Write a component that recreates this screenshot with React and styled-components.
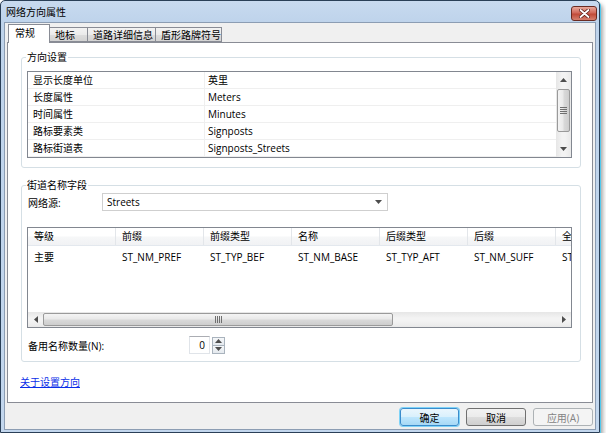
import React from "react";
import styled, { createGlobalStyle } from "styled-components";

const GlobalStyle = createGlobalStyle`
  html, body { margin: 0; padding: 0; background: #ffffff; }
  body {
    font-family: "Open Sans", "Noto Sans CJK SC", sans-serif;
    font-size: 10px;
    color: #000;
  }
  * { box-sizing: border-box; }
`;

const Window = styled.div`
  width: 600px;
  height: 433px;
  display: flex;
  flex-direction: column;
  padding: 0 3px 2px;
  border: 1px solid #2a3f57;
  border-radius: 5px 5px 0 0;
  background: linear-gradient(#c8daef, #bed3eb 22px, #c2d6ed);
  box-shadow: 1px 1px 0 #52c8ec, 3px 4px 4px rgba(0, 0, 0, 0.35);
`;

const TitleBar = styled.div`
  height: 21px;
  display: flex;
  align-items: center;
  justify-content: space-between;
  padding-left: 2px;
`;

const Title = styled.span`
  font-size: 10px;
  line-height: 12px;
  margin-top: 1px;
`;

const CloseButton = styled.div`
  width: 26px;
  height: 15px;
  margin-top: 3px;
  margin-right: -1px;
  display: flex;
  align-items: center;
  justify-content: center;
  border: 1px solid #6b2b22;
  border-radius: 3px;
  background: linear-gradient(#e9a99b, #d0685a 45%, #c04a38 55%, #d5806f);
`;

const Client = styled.div`
  flex: 1;
  display: flex;
  flex-direction: column;
  background: #f0f0f0;
  border: 1px solid #8c9db3;
`;

const TabStrip = styled.div`
  height: 19px;
  display: flex;
  align-items: flex-end;
  padding-left: 3px;
`;

const Tab = styled.div`
  position: relative;
  width: ${(p) => p.$w}px;
  height: ${(p) => (p.$active ? 19 : 15)}px;
  margin-bottom: ${(p) => (p.$active ? -1 : 0)}px;
  margin-right: -1px;
  padding-left: ${(p) => (p.$active ? 6 : 5)}px;
  line-height: ${(p) => (p.$active ? 17 : 14)}px;
  border: 1px solid #898c95;
  border-bottom: ${(p) => (p.$active ? "none" : "1px solid #898c95")};
  background: ${(p) =>
    p.$active
      ? "#ffffff"
      : "linear-gradient(#f3f3f3, #ebebeb 50%, #dddddd 51%, #d3d3d3)"};
  z-index: ${(p) => (p.$active ? 2 : 1)};
  white-space: nowrap;
`;

const TabPanel = styled.div`
  height: 361px;
  margin: 0 2px;
  padding: 7px 11px 0 13px;
  background: #ffffff;
  border: 1px solid #898c95;
  display: flex;
  flex-direction: column;
`;

const Group = styled.fieldset`
  margin: ${(p) => p.$top || 0}px 0 0;
  padding: ${(p) => p.$pt}px 8px ${(p) => p.$pb}px 5px;
  border: 1px solid #d5dfe5;
  border-radius: 3px;
  min-width: 0;
`;

const Legend = styled.legend`
  padding: 0 1px;
  margin-left: -1px;
  line-height: 14px;
`;

const PropGrid = styled.div`
  display: flex;
  height: 87px;
  border: 1px solid #828790;
  background: #fff;
`;

const PropRows = styled.div`
  flex: 1;
`;

const PropRow = styled.div`
  display: grid;
  grid-template-columns: 177px 1fr;
  height: 17px;
  border-bottom: 1px solid #efefef;
  line-height: 16px;
`;

const PropName = styled.div`
  padding-left: 5px;
  border-right: 1px solid #efefef;
  white-space: nowrap;
`;

const PropValue = styled.div`
  padding-left: 3px;
  white-space: nowrap;
`;

const VScroll = styled.div`
  width: 15px;
  display: flex;
  flex-direction: column;
  background: linear-gradient(90deg, #e6e6e6, #f3f3f3 40%, #f3f3f3 60%, #e9e9e9);
`;

const ArrowBtn = styled.div`
  width: ${(p) => p.$w || 15}px;
  height: ${(p) => p.$h || 15}px;
  display: flex;
  align-items: center;
  justify-content: center;
  flex-shrink: 0;
`;

const VThumb = styled.div`
  height: 43px;
  margin: 1px 1px 0;
  border: 1px solid #9a9a9a;
  border-radius: 2px;
  background: linear-gradient(90deg, #f4f4f4, #e9e9e9 45%, #d9d9d9 55%, #cdcdcd);
  display: flex;
  align-items: center;
  justify-content: center;
`;

const Track = styled.div`
  flex: 1;
`;

const FieldRow = styled.div`
  display: flex;
  align-items: center;
  height: 18px;
  margin-top: ${(p) => p.$top || 0}px;
`;

const FieldLabel = styled.div`
  width: ${(p) => p.$w}px;
  padding-left: 1px;
  white-space: nowrap;
`;

const Combo = styled.div`
  width: 286px;
  height: 18px;
  display: flex;
  align-items: center;
  justify-content: space-between;
  padding: 0 5px 0 4px;
  border: 1px solid #cfcfcf;
  background: #fff;
`;

const ListView = styled.div`
  height: 101px;
  margin-top: 16px;
  display: flex;
  flex-direction: column;
  border: 1px solid #828790;
  background: #fff;
  overflow: hidden;
`;

const ListBody = styled.div`
  flex: 1;
  overflow: hidden;
`;

const ListLine = styled.div`
  display: flex;
  height: ${(p) => (p.$head ? 18 : 18)}px;
  line-height: ${(p) => (p.$head ? 17 : 18)}px;
  margin-top: ${(p) => (p.$head ? 0 : 2)}px;
  width: 620px;
  background: ${(p) =>
    p.$head ? "linear-gradient(#ffffff, #ffffff 45%, #f6f7f8 55%, #f1f2f4)" : "transparent"};
  border-bottom: ${(p) => (p.$head ? "1px solid #e3e8ee" : "none")};
`;

const Cell = styled.div`
  width: 88px;
  flex-shrink: 0;
  padding-left: ${(p) => (p.$head ? 6 : 6)}px;
  border-right: ${(p) => (p.$head ? "1px solid #e3e6ea" : "none")};
  white-space: nowrap;
  overflow: hidden;
`;

const HScroll = styled.div`
  height: 15px;
  display: flex;
  background: linear-gradient(#e6e6e6, #f3f3f3 40%, #f3f3f3 60%, #e9e9e9);
`;

const HThumb = styled.div`
  width: 350px;
  margin: 1px 0 1px 0;
  border: 1px solid #9a9a9a;
  border-radius: 2px;
  background: linear-gradient(#f4f4f4, #e9e9e9 45%, #d9d9d9 55%, #cdcdcd);
  display: flex;
  align-items: center;
  justify-content: center;
`;

const Spinner = styled.div`
  display: flex;
  align-items: center;
  gap: 2px;
`;

const SpinBox = styled.div`
  width: 21px;
  height: 18px;
  padding-right: 4px;
  text-align: right;
  line-height: 16px;
  border: 1px solid #e0e4e9;
  border-top-color: #abadb3;
  background: #fff;
`;

const SpinButtons = styled.div`
  width: 13px;
  height: 17px;
  display: flex;
  flex-direction: column;
`;

const SpinBtn = styled.div`
  flex: 1;
  display: flex;
  align-items: center;
  justify-content: center;
  border: 1px solid #a9b3bd;
  margin-top: ${(p) => (p.$second ? -1 : 0)}px;
  background: linear-gradient(#f5f7f9, #e4e9ee);
`;

const HelpLink = styled.a`
  margin: 13px 0 0 -1px;
  width: max-content;
  line-height: 14px;
  color: #0b2fe8;
  text-decoration: underline;
`;

const ButtonRow = styled.div`
  display: flex;
  justify-content: flex-end;
  gap: 7px;
  padding: 5px 2px 0 0;
`;

const Button = styled.div`
  width: ${(p) => p.$w || 60}px;
  height: 18px;
  display: flex;
  align-items: center;
  justify-content: center;
  border-radius: 3px;
  border: 1px solid ${(p) => (p.$primary ? "#3a8ccc" : p.$disabled ? "#adb2b5" : "#707070")};
  color: ${(p) => (p.$disabled ? "#838383" : "#000")};
  background: ${(p) =>
    p.$primary
      ? "linear-gradient(#eaf6fd, #d9f0fc 50%, #bee6fd 51%, #a7d9f5)"
      : p.$disabled
      ? "#f4f4f4"
      : "linear-gradient(#f2f2f2, #ebebeb 50%, #dddddd 51%, #cfcfcf)"};
  box-shadow: ${(p) => (p.$primary ? "0 0 0 1px #7fd3f7" : "none")};
`;

const Tri = ({ dir }) => {
  const pts = {
    up: "0,4 3.5,0 7,4",
    down: "0,0 7,0 3.5,4",
    left: "4,0 4,7 0,3.5",
    right: "0,0 0,7 4,3.5",
  }[dir];
  const vertical = dir === "up" || dir === "down";
  return (
    <svg width={vertical ? 7 : 4} height={vertical ? 4 : 7}>
      <polygon points={pts} fill="#4d4d4d" />
    </svg>
  );
};

const Grip = ({ vertical }) =>
  vertical ? (
    <svg width="7" height="7">
      <path d="M0 0.5h7M0 2.5h7M0 4.5h7M0 6.5h7" stroke="#6f6f6f" strokeWidth="1" />
    </svg>
  ) : (
    <svg width="7" height="7">
      <path d="M0.5 0v7M2.5 0v7M4.5 0v7M6.5 0v7" stroke="#6f6f6f" strokeWidth="1" />
    </svg>
  );

const props = [
  ["显示长度单位", "英里"],
  ["长度属性", "Meters"],
  ["时间属性", "Minutes"],
  ["路标要素类", "Signposts"],
  ["路标街道表", "Signposts_Streets"],
];

const heads = ["等级", "前缀", "前缀类型", "名称", "后缀类型", "后缀", "全名"];
const row = ["主要", "ST_NM_PREF", "ST_TYP_BEF", "ST_NM_BASE", "ST_TYP_AFT", "ST_NM_SUFF", "ST_FULLNAME"];

const tabs = [
  ["常规", 42],
  ["地标", 39],
  ["道路详细信息", 69],
  ["盾形路牌符号", 67],
];

export default function App() {
  return (
    <>
      <GlobalStyle />
      <Window>
        <TitleBar>
          <Title>网络方向属性</Title>
          <CloseButton>
            <svg width="11" height="9" viewBox="0 0 11 9">
              <path d="M1.5 1l8 7M9.5 1l-8 7" stroke="#5a1d16" strokeWidth="3.4" strokeLinecap="round" />
              <path d="M1.5 1l8 7M9.5 1l-8 7" stroke="#ffffff" strokeWidth="1.8" strokeLinecap="round" />
            </svg>
          </CloseButton>
        </TitleBar>
        <Client>
          <TabStrip>
            {tabs.map(([t, w], i) => (
              <Tab key={t} $w={w} $active={i === 0}>
                {t}
              </Tab>
            ))}
          </TabStrip>
          <TabPanel>
            <Group $pt={7} $pb={9}>
              <Legend>方向设置</Legend>
              <PropGrid>
                <PropRows>
                  {props.map(([k, v]) => (
                    <PropRow key={k}>
                      <PropName>{k}</PropName>
                      <PropValue>{v}</PropValue>
                    </PropRow>
                  ))}
                </PropRows>
                <VScroll>
                  <ArrowBtn $h={16}>
                    <Tri dir="up" />
                  </ArrowBtn>
                  <VThumb>
                    <Grip vertical />
                  </VThumb>
                  <Track />
                  <ArrowBtn $h={16}>
                    <Tri dir="down" />
                  </ArrowBtn>
                </VScroll>
              </PropGrid>
            </Group>

            <Group $top={10} $pt={1} $pb={7}>
              <Legend>街道名称字段</Legend>
              <FieldRow>
                <FieldLabel $w={75}>网络源:</FieldLabel>
                <Combo>
                  <span>Streets</span>
                  <Tri dir="down" />
                </Combo>
              </FieldRow>
              <ListView>
                <ListBody>
                  <ListLine $head>
                    {heads.map((h) => (
                      <Cell key={h} $head>
                        {h}
                      </Cell>
                    ))}
                  </ListLine>
                  <ListLine>
                    {row.map((c) => (
                      <Cell key={c}>{c}</Cell>
                    ))}
                  </ListLine>
                </ListBody>
                <HScroll>
                  <ArrowBtn>
                    <Tri dir="left" />
                  </ArrowBtn>
                  <HThumb>
                    <Grip />
                  </HThumb>
                  <Track />
                  <ArrowBtn>
                    <Tri dir="right" />
                  </ArrowBtn>
                </HScroll>
              </ListView>
              <FieldRow $top={8}>
                <FieldLabel $w={162}>备用名称数量(N):</FieldLabel>
                <Spinner>
                  <SpinBox>0</SpinBox>
                  <SpinButtons>
                    <SpinBtn>
                      <Tri dir="up" />
                    </SpinBtn>
                    <SpinBtn $second>
                      <Tri dir="down" />
                    </SpinBtn>
                  </SpinButtons>
                </Spinner>
              </FieldRow>
            </Group>

            <HelpLink href="#">关于设置方向</HelpLink>
          </TabPanel>
          <ButtonRow>
            <Button $primary $w={59}>确定</Button>
            <Button>取消</Button>
            <Button $disabled>应用(A)</Button>
          </ButtonRow>
        </Client>
      </Window>
    </>
  );
}
